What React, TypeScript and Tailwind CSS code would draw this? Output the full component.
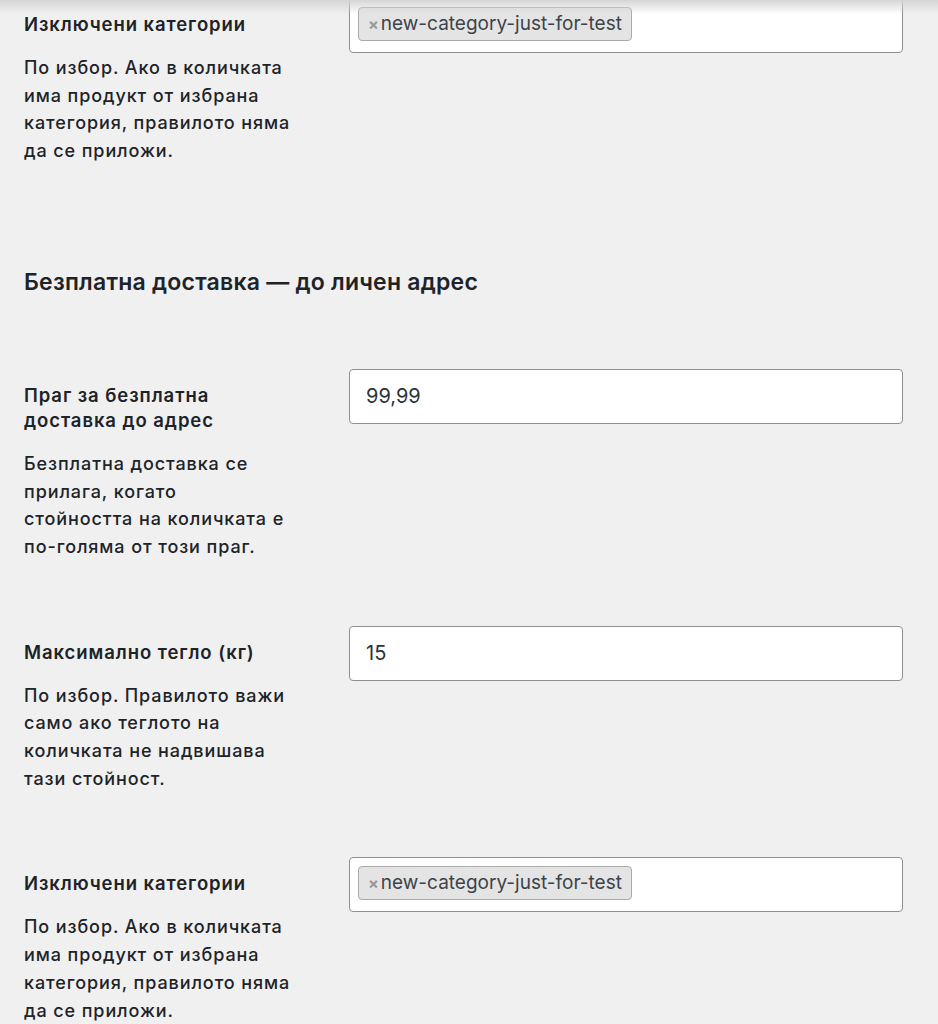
import type { ReactNode } from 'react'

const font = { fontFamily: 'Inter, "Noto Sans", sans-serif' }

function Chip({ label }: { label: string }) {
  return (
    <span className="inline-flex items-center h-[34px] pl-[9px] pr-[9px] rounded-[4px] border border-[#aaaaaa] bg-[#e4e4e4] text-[19px] text-[#3c434a]">
      <span className="mr-[2px] text-[16px] font-bold text-[#999999]">×</span>
      {label}
    </span>
  )
}

function TagsBox({ tags }: { tags: string[] }) {
  return (
    <div className="h-[55px] w-[554px] rounded-[4px] border border-[#8c8f94] bg-white pl-[8px] pt-[8px]">
      {tags.map((t) => (
        <Chip key={t} label={t} />
      ))}
    </div>
  )
}

function TextBox({ value }: { value: string }) {
  return (
    <div className="h-[55px] w-[554px] rounded-[4px] border border-[#8c8f94] bg-white px-[16px] flex items-center text-[20px] text-[#2c3338]">
      {value}
    </div>
  )
}

function Row({ label, help, children }: { label: ReactNode; help: ReactNode; children: ReactNode }) {
  return (
    <div className="flex">
      <div className="w-[300px] shrink-0 mr-[25px] pt-[14px]">
        <div className="text-[18.5px] leading-[25px] tracking-[0.05em] font-semibold text-[#1d2327]">{label}</div>
        <p className="mt-[17px] text-[18px] leading-[27.7px] tracking-[0.05em] font-medium text-[#1d2327]">{help}</p>
      </div>
      {children}
    </div>
  )
}

export default function App() {
  return (
    <div lang="bg" className="relative min-h-screen overflow-hidden bg-[#f0f0f1]" style={font}>
      <div className="pointer-events-none absolute inset-x-0 top-0 h-[14px] bg-gradient-to-b from-[#d5d5d6] to-[#f0f0f1]/0" />

      <div className="pl-[24px] -mt-[2px]">
        <Row
          label="Изключени категории"
          help={
            <>
              По избор. Ако в количката
              <br />
              има продукт от избрана
              <br />
              категория, правилото няма
              <br />
              да се приложи.
            </>
          }
        >
          <TagsBox tags={['new-category-just-for-test']} />
        </Row>

        <h2 className="mt-[102px] text-[23px] leading-[30px] tracking-[0.01em] font-semibold text-[#1d2327]">
          Безплатна доставка — до личен адрес
        </h2>

        <div className="mt-[72px] flex flex-col gap-[65px]">
          <Row
            label={
              <>
                Праг за безплатна
                <br />
                доставка до адрес
              </>
            }
            help={
              <>
                Безплатна доставка се
                <br />
                прилага, когато
                <br />
                стойността на количката е
                <br />
                по-голяма от този праг.
              </>
            }
          >
            <TextBox value="99,99" />
          </Row>

          <Row
            label="Максимално тегло (кг)"
            help={
              <>
                По избор. Правилото важи
                <br />
                само ако теглото на
                <br />
                количката не надвишава
                <br />
                тази стойност.
              </>
            }
          >
            <TextBox value="15" />
          </Row>

          <Row
            label="Изключени категории"
            help={
              <>
                По избор. Ако в количката
                <br />
                има продукт от избрана
                <br />
                категория, правилото няма
                <br />
                да се приложи.
              </>
            }
          >
            <TagsBox tags={['new-category-just-for-test']} />
          </Row>
        </div>
      </div>
    </div>
  )
}
